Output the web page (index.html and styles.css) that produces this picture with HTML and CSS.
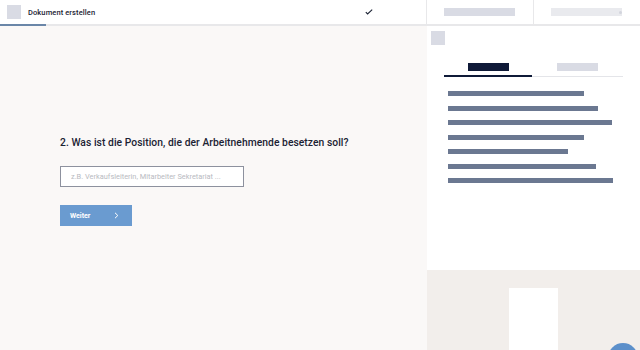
FILE: index.html
```html
<!DOCTYPE html>
<html lang="de">
<head>
<meta charset="utf-8">
<link rel="stylesheet" href="styles.css">
</head>
<body>
<header class="topbar">
  <div class="brand">
    <div class="logo"></div>
    <span class="title">Dokument erstellen</span>
  </div>
  <div class="check">
    <svg width="8" height="6" viewBox="0 0 8 6"><path d="M0.8 3.2 L2.6 5 L7.2 0.6" fill="none" stroke="#1b2233" stroke-width="1.1"/></svg>
  </div>
  <div class="hcell"><div class="hbar"></div></div>
  <div class="hcell"><div class="hbar light"></div><span class="dot"></span></div>
  <div class="progress"></div>
</header>
<main class="layout">
  <section class="form">
    <h2 class="question">2. Was ist die Position, die der Arbeitnehmende besetzen soll?</h2>
    <input class="field" type="text" placeholder="z.B. Verkaufsleiterin, Mitarbeiter Sekretariat ...">
    <button class="next">Weiter <span class="chev">
      <svg width="5" height="7" viewBox="0 0 5 7"><path d="M1 0.8 L3.8 3.5 L1 6.2" fill="none" stroke="#fff" stroke-width="1"/></svg>
    </span></button>
  </section>
  <aside class="side">
    <div class="preview">
      <div class="sq"></div>
      <div class="tabs">
        <div class="tab active"><span class="tlabel"></span></div>
        <div class="tab"><span class="tlabel"></span></div>
      </div>
      <div class="lines">
        <div class="line" style="width:136px"></div>
        <div class="line" style="width:150px"></div>
        <div class="line" style="width:164px"></div>
        <div class="line" style="width:136px"></div>
        <div class="line" style="width:120px"></div>
        <div class="line" style="width:148px"></div>
        <div class="line" style="width:165px"></div>
      </div>
    </div>
    <div class="doc">
      <div class="page"></div>
      <div class="fab"></div>
    </div>
  </aside>
</main>
</body>
</html>
```
FILE: styles.css
```css
* { box-sizing: border-box; }
html, body { margin: 0; padding: 0; }
body {
  width: 640px;
  height: 350px;
  overflow: hidden;
  font-family: Roboto, "Liberation Sans", sans-serif;
  background: #faf8f7;
}
.topbar {
  position: relative;
  height: 26px;
  background: #fff;
  border-bottom: 2px solid #e8e8ea;
  display: flex;
}
.brand {
  display: flex;
  align-items: center;
  padding-left: 7px;
  width: 340px;
}
.logo {
  width: 14px;
  height: 14px;
  background: #d9dbe4;
  margin-right: 7px;
}
.title {
  font-size: 7.5px;
  font-weight: 500;
  color: #1b2233;
  letter-spacing: 0.1px;
}
.check {
  width: 87px;
  display: flex;
  align-items: center;
  justify-content: center;
  padding-right: 27px;
}
.hcell {
  position: relative;
  width: 107px;
  border-left: 1px solid #e8e8ea;
  display: flex;
  align-items: center;
  padding-left: 17px;
}
.hcell:last-of-type { width: 106px; padding-left: 14px; }
.hbar {
  width: 71px;
  height: 8px;
  background: #d9dbe4;
}
.hbar.light { background: #e9eaee; }
.dot {
  position: absolute;
  left: 85px;
  top: 11px;
  width: 3px;
  height: 3px;
  border-radius: 50%;
  background: #d3d5dd;
}
.progress {
  position: absolute;
  left: 0;
  bottom: -2px;
  width: 46px;
  height: 2px;
  background: #6a86a8;
}
.layout {
  display: flex;
  height: 324px;
}
.form {
  width: 427px;
  padding: 110px 0 0 60px;
}
.question {
  margin: 0 0 17px;
  font-size: 10.3px;
  font-weight: 500;
  color: #1b2233;
  letter-spacing: 0.05px;
}
.field {
  display: block;
  width: 184px;
  height: 21px;
  border: 1px solid #8d919e;
  background: #fff;
  padding: 0 10px;
  font-family: Roboto, "Liberation Sans", sans-serif;
  font-size: 7.4px;
  margin: 0 0 18px;
  outline: none;
}
.field::placeholder { color: #b8bac1; }
.next {
  display: flex;
  align-items: center;
  width: 72px;
  height: 21px;
  border: 0;
  background: #6a9bd0;
  color: #fff;
  font-family: Roboto, "Liberation Sans", sans-serif;
  font-size: 7px;
  font-weight: 700;
  padding: 0 0 0 10px;
}
.chev { margin-left: 24px; display: flex; }
.side {
  width: 213px;
  background: #fff;
  display: flex;
  flex-direction: column;
}
.preview {
  height: 244px;
  padding: 5px 0 0 4px;
}
.sq {
  width: 14px;
  height: 14px;
  background: #d9dbe4;
}
.tabs {
  display: flex;
  margin: 18px 0 0 13px;
  width: 179px;
}
.tab {
  flex: 0 0 88px;
  height: 14px;
  border-bottom: 1px solid #e4e5e9;
  display: flex;
  justify-content: center;
}
.tab + .tab { flex-basis: 91px; }
.tab.active { border-bottom: 2px solid #0f1a38; }
.tlabel {
  width: 41px;
  height: 8px;
  background: #d9dbe4;
}
.tab.active .tlabel { background: #0f1a38; }
.lines {
  margin: 14px 0 0 17px;
  display: flex;
  flex-direction: column;
  gap: 9.5px;
}
.line {
  height: 5px;
  background: #6b7891;
}
.doc {
  position: relative;
  flex: 1;
  background: #f2eeeb;
  overflow: hidden;
}
.page {
  width: 49px;
  height: 70px;
  background: #fff;
  margin: 18px 0 0 82px;
}
.fab {
  position: absolute;
  left: 181px;
  top: 73px;
  width: 30px;
  height: 30px;
  border-radius: 50%;
  background: #5c8fca;
}
```
